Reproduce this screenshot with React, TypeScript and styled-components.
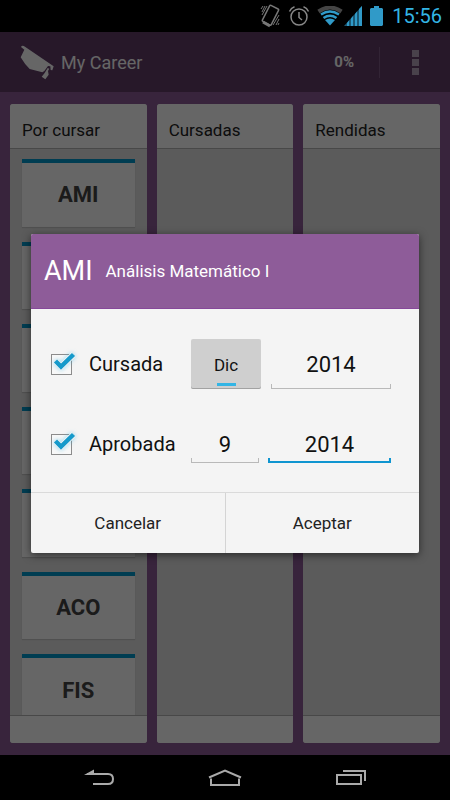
import React, { useState } from "react";
import styled, { createGlobalStyle } from "styled-components";

const GlobalStyle = createGlobalStyle`
  * { box-sizing: border-box; }
  body { margin: 0; background: #000; }
  body, button, input { font-family: Roboto, "Liberation Sans", sans-serif; }
`;

const Screen = styled.div`
  display: flex;
  flex-direction: column;
  min-height: 100vh;
  background: #000;
`;

const StatusBar = styled.div`
  display: flex;
  align-items: center;
  justify-content: flex-end;
  height: 32px;
  padding-right: 8px;
  color: #33b5e5;
`;

const StatusIcons = styled.div`
  display: flex;
  align-items: center;
  gap: 7px;
  margin-right: 9px;
`;

const IconPair = styled.span`
  display: flex;
  gap: 1px;
`;

const Clock = styled.time`
  font-size: 20px;
  line-height: 32px;
`;

const Stage = styled.div`
  flex: 1;
  display: grid;
  grid-template-columns: minmax(0, 1fr);
`;

const AppLayer = styled.div`
  grid-area: 1 / 1;
  display: flex;
  flex-direction: column;
  min-width: 0;
`;

const DimLayer = styled.div`
  grid-area: 1 / 1;
  z-index: 1;
  display: flex;
  align-items: center;
  padding: 0 31px;
  background: rgba(0, 0, 0, 0.6);
`;

const ActionBar = styled.header`
  display: flex;
  align-items: center;
  height: 60px;
  padding: 0 20px;
  color: #fff;
  background: #613c68;
  box-shadow: 0 1px 3px rgba(0, 0, 0, 0.4);
`;

const AppTitle = styled.h1`
  flex: 1;
  margin: 0 0 0 6px;
  font-size: 18px;
  font-weight: 400;
`;

const Progress = styled.span`
  padding-right: 25px;
  font-size: 15px;
  font-weight: 700;
`;

const OverflowButton = styled.button`
  display: flex;
  flex-direction: column;
  align-items: center;
  justify-content: center;
  gap: 2px;
  width: 51px;
  height: 31px;
  margin: 0;
  padding: 0 0 0 20px;
  border: 0;
  border-left: 1px solid #7d5b84;
  background: none;
`;

const Dot = styled.span`
  width: 7px;
  height: 7px;
  background: #b7a6bb;
`;

const Board = styled.main`
  flex: 1;
  display: grid;
  grid-template-columns: repeat(3, minmax(0, 1fr));
  gap: 10px;
  padding: 12px 10px;
  background: #8c5a97;
`;

const Column = styled.section`
  display: flex;
  flex-direction: column;
  overflow: hidden;
  border-radius: 3px;
  background: #e4e4e4;
`;

const ColumnTitle = styled.h2`
  height: 45px;
  margin: 0;
  padding: 5px 12px 0;
  border-bottom: 1px solid #b4b4b4;
  background: #fff;
  color: #222;
  font-size: 17px;
  font-weight: 400;
  line-height: 42px;
`;

const ColumnBody = styled.div`
  flex: 1;
  display: flex;
  overflow: hidden;
`;

const ColumnFoot = styled.div`
  height: 28px;
  border-top: 1px solid #b4b4b4;
  background: #fff;
`;

const CardList = styled.ul`
  flex: 1;
  display: flex;
  flex-direction: column;
  gap: 15px;
  margin: 0 0 -7px;
  padding: 10px 12px 0;
  list-style: none;
`;

const Card = styled.li`
  flex: 1;
  display: flex;
  align-items: center;
  justify-content: center;
  border-top: 4px solid #0099cc;
  background: #fff;
  box-shadow: 0 1px 1px rgba(0, 0, 0, 0.12);
  color: #444;
  font-size: 22px;
  font-weight: 700;
`;

const Dialog = styled.form`
  flex: 1;
  min-width: 0;
  overflow: hidden;
  border-radius: 2px;
  background: #f4f4f4;
  box-shadow: 0 2px 8px rgba(0, 0, 0, 0.55);
  color: #111;
`;

const DialogHead = styled.div`
  display: flex;
  align-items: center;
  gap: 13px;
  height: 75px;
  padding: 0 13px;
  border-bottom: 1px solid #86489a;
  background: #8e5c99;
  color: #fff;
`;

const SubjectCode = styled.span`
  font-size: 27px;
`;

const SubjectName = styled.h2`
  margin: 0;
  font-size: 17px;
  font-weight: 400;
`;

const DialogBody = styled.div`
  display: flex;
  flex-direction: column;
  gap: 30px;
  padding: 30px 28px 23px 20px;
`;

const FieldRow = styled.div`
  display: flex;
  align-items: center;
  height: 50px;
`;

const CheckLabel = styled.label`
  display: flex;
  align-items: center;
  flex: 0 0 140px;
  gap: 17px;
  font-size: 20px;
`;

const CheckBox = styled.span`
  position: relative;
  display: flex;
  width: 21px;
  height: 21px;
`;

const CheckInput = styled.input`
  appearance: none;
  width: 21px;
  height: 21px;
  margin: 0;
  border: 1px solid #8c8c8c;
  background: #f8f8f8;
`;

const Tick = styled.svg`
  position: absolute;
  left: 0;
  top: -4px;
  pointer-events: none;
  filter: drop-shadow(0 0 2px rgba(51, 181, 229, 0.5));
`;

const MonthButton = styled.button`
  display: flex;
  flex-direction: column;
  align-items: center;
  justify-content: flex-end;
  gap: 8px;
  width: 70px;
  height: 50px;
  margin-right: 10px;
  padding: 0 0 3px;
  border: 0;
  border-radius: 2px;
  background: #cfcfcf;
  box-shadow: inset 0 -1px 0 #a2a2a2;
  color: #111;
  font-size: 17px;
  line-height: 20px;

  &::after {
    content: "";
    width: 19px;
    height: 3px;
    background: #33b5e5;
  }
`;

const NumberInput = styled.input<{ $compact?: boolean; $active?: boolean; $short?: boolean }>`
  --line: ${(p) => (p.$active ? "#0f95d0" : "#b9b9b9")};
  --thick: ${(p) => (p.$active ? "2px" : "1px")};
  flex: ${(p) => (p.$compact ? "0 0 68px" : "1")};
  width: 0;
  min-width: 0;
  height: ${(p) => (p.$short ? "38px" : "50px")};
  margin: 0 ${(p) => (p.$compact ? "9px" : "0")} 0 0;
  padding: 0;
  border: 0;
  outline: none;
  background:
    linear-gradient(var(--line), var(--line)) left bottom / 100% var(--thick) no-repeat,
    linear-gradient(var(--line), var(--line)) left bottom / var(--thick) 5px no-repeat,
    linear-gradient(var(--line), var(--line)) right bottom / var(--thick) 5px no-repeat;
  color: #111;
  font-size: 22px;
  text-align: center;
`;

const DialogActions = styled.div`
  display: flex;
  border-top: 1px solid #dadada;
`;

const ActionButton = styled.button`
  flex: 1;
  height: 60px;
  margin: 0;
  padding: 0;
  border: 0;
  background: none;
  color: #222;
  font-size: 17px;

  & + & {
    border-left: 1px solid #d4d4d4;
  }
`;

const NavBar = styled.nav`
  display: flex;
  justify-content: center;
  height: 45px;
  padding: 0 36px;
`;

const NavButton = styled.button`
  display: flex;
  align-items: center;
  justify-content: center;
  flex: 1;
  padding: 0;
  border: 0;
  background: none;
`;

const CapLogo = () => (
  <svg width="35" height="35" viewBox="60 43 105 105" fill="#fff" aria-hidden="true">
    <path d="M63 49Q66 42 75 48L161 107L157 119L152 118L151 107L144 106L133 121L127 125L89 115Q74 101 62 80L73 57Z" />
    <path d="M143 112L148 114L144 121L146 132L136 146L125 138L134 127L138 120Z" />
  </svg>
);

const VibrateIcon = () => (
  <svg width="22" height="26" viewBox="0 0 22 26" fill="none" stroke="#777" aria-hidden="true">
    <rect x="6.5" y="3" width="10" height="18" rx="1" transform="rotate(27 11 12)" strokeWidth="1.5" />
    <path d="M4 19L11 23" strokeWidth="3" />
    <path d="M3 9L6 3M3 12L8 3M2 6L4 3M14 22L20 12M17 22L20 16M19 22L20 20" strokeWidth="1" />
  </svg>
);

const AlarmIcon = () => (
  <svg width="22" height="22" viewBox="0 0 22 22" fill="none" stroke="#888" strokeWidth="1.5" aria-hidden="true">
    <circle cx="11" cy="12" r="8" />
    <path d="M11 7V12.5L14 15M1.5 6.5Q3 3 6.5 1.8M15.500 1.8Q19 3 20.5 6.5" />
  </svg>
);

const WifiIcon = () => (
  <svg width="26" height="20" viewBox="0 0 26 20" fill="none" aria-hidden="true">
    <path d="M1.5 5.5Q13 -2.5 24.5 5.5" stroke="#454545" strokeWidth="4" />
    <path d="M4 8.5Q13 2.5 22 8.5" stroke="#309ac8" strokeWidth="2.5" />
    <path d="M6.5 12Q13 7.5 19.5 12" stroke="#309ac8" strokeWidth="2.5" />
    <path d="M8 14Q13 11 18 14L13 19.5Z" fill="#309ac8" />
  </svg>
);

const SignalIcon = () => (
  <svg width="19" height="20" viewBox="0 0 19 20" aria-hidden="true">
    <path d="M18 0V20H0Z" fill="#1b5874" />
    <path d="M18 0V20H15V3ZM13 5.5V20H11V8ZM9 10V20H7V12.5ZM5 14.5V20H3V17Z" fill="#309ac8" />
  </svg>
);

const BatteryIcon = () => (
  <svg width="13" height="20" viewBox="0 0 13 20" fill="#309ac8" aria-hidden="true">
    <path d="M4 0H9V2H12L13 3V19L12 20H1L0 19V3L1 2H4Z" />
  </svg>
);

const BackIcon = () => (
  <svg width="32" height="18" viewBox="0 0 32 18" aria-hidden="true">
    <path d="M1 6L11 0.5V6Z" fill="#aaa" />
    <path d="M4 5H25Q30 5 30 10T25 15H10" fill="none" stroke="#aaa" strokeWidth="2" />
  </svg>
);

const HomeIcon = () => (
  <svg width="34" height="18" viewBox="0 0 34 18" fill="none" stroke="#aaa" strokeWidth="2" aria-hidden="true">
    <path d="M3 9.5V16H31V9.5M1 8.5L17 1.5L33 8.5" />
  </svg>
);

const RecentIcon = () => (
  <svg width="32" height="18" viewBox="0 0 32 18" fill="none" stroke="#aaa" strokeWidth="2" aria-hidden="true">
    <path d="M2 6H26V15H2ZM8 2H30V12" />
  </svg>
);

const columns: { title: string; cards: string[] }[] = [
  { title: "Por cursar", cards: ["AMI", "", "", "", "", "ACO", "FIS"] },
  { title: "Cursadas", cards: [] },
  { title: "Rendidas", cards: [] },
];

function Check({ label }: { label: string }) {
  const [on, setOn] = useState(true);
  return (
    <CheckLabel>
      <CheckBox>
        <CheckInput type="checkbox" checked={on} onChange={() => setOn(!on)} />
        {on && (
          <Tick width="26" height="22" viewBox="0 0 26 22">
            <path d="M4.5 11L10 16.5L22.5 4.5" fill="none" stroke="#f4f4f4" strokeWidth="6" />
            <path d="M4.5 11L10 16.5L22.5 4.5" fill="none" stroke="#159acb" strokeWidth="4.500" />
          </Tick>
        )}
      </CheckBox>
      {label}
    </CheckLabel>
  );
}

export default function App() {
  return (
    <Screen>
      <GlobalStyle />
      <StatusBar>
        <StatusIcons>
          <VibrateIcon />
          <AlarmIcon />
          <IconPair>
            <WifiIcon />
            <SignalIcon />
          </IconPair>
          <BatteryIcon />
        </StatusIcons>
        <Clock>15:56</Clock>
      </StatusBar>
      <Stage>
        <AppLayer>
          <ActionBar>
            <CapLogo />
            <AppTitle>My Career</AppTitle>
            <Progress>0%</Progress>
            <OverflowButton aria-label="Más opciones">
              <Dot />
              <Dot />
              <Dot />
            </OverflowButton>
          </ActionBar>
          <Board>
            {columns.map((column) => (
              <Column key={column.title}>
                <ColumnTitle>{column.title}</ColumnTitle>
                <ColumnBody>
                  <CardList>
                    {column.cards.map((card, index) => (
                      <Card key={index}>{card}</Card>
                    ))}
                  </CardList>
                </ColumnBody>
                <ColumnFoot />
              </Column>
            ))}
          </Board>
        </AppLayer>
        <DimLayer>
          <Dialog role="dialog" aria-label="Análisis Matemático I" onSubmit={(e: React.FormEvent) => e.preventDefault()}>
            <DialogHead>
              <SubjectCode>AMI</SubjectCode>
              <SubjectName>Análisis Matemático I</SubjectName>
            </DialogHead>
            <DialogBody>
              <FieldRow>
                <Check label="Cursada" />
                <MonthButton type="button">Dic</MonthButton>
                <NumberInput aria-label="Año de cursada" defaultValue="2014" />
              </FieldRow>
              <FieldRow>
                <Check label="Aprobada" />
                <NumberInput $compact $short aria-label="Nota" defaultValue="9" />
                <NumberInput $active $short aria-label="Año de aprobación" defaultValue="2014" />
              </FieldRow>
            </DialogBody>
            <DialogActions>
              <ActionButton type="button">Cancelar</ActionButton>
              <ActionButton type="submit">Aceptar</ActionButton>
            </DialogActions>
          </Dialog>
        </DimLayer>
      </Stage>
      <NavBar>
        <NavButton aria-label="Atrás"><BackIcon /></NavButton>
        <NavButton aria-label="Inicio"><HomeIcon /></NavButton>
        <NavButton aria-label="Recientes"><RecentIcon /></NavButton>
      </NavBar>
    </Screen>
  );
}
